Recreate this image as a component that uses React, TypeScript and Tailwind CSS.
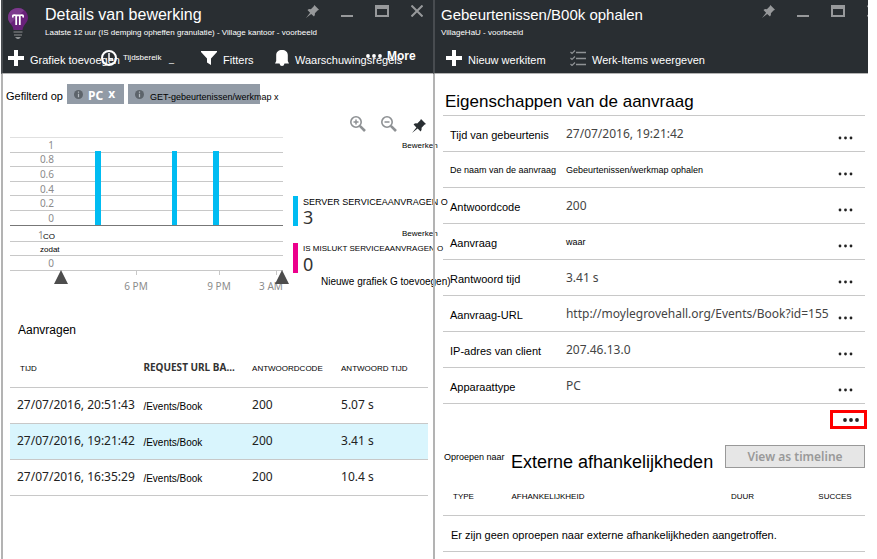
import type { ReactNode } from 'react';

const SANS = "font-['Liberation_Sans',Arial,sans-serif]";
const HUMAN = "font-['Noto_Sans','Open_Sans',sans-serif]";

function PinIcon({ size }: { size: number }) {
  return (
    <svg width={size} height={size} viewBox="0 0 14 14" fill="currentColor" aria-hidden="true">
      <path d="M9 0L14 5L12.4 5.8L9.6 8.8Q10 11 8.6 12.4L5.6 9.6L0 14L4.4 8.4L1.6 5.4Q3 4 5.2 4.5L8.2 1.6Z" />
    </svg>
  );
}

function BulbIcon() {
  return (
    <svg width="20" height="31" viewBox="0 0 20 31" aria-hidden="true">
      <path d="M10 0C4.300 0 0 4.300 0 9.600C0 13.500 3 16 4.400 18.600C5 19.800 5.200 20.500 5.500 22H14.500C14.800 20.500 15 19.800 15.600 18.600C17 16 20 13.500 20 9.600C20 4.300 15.700 0 10 0Z" fill="#68217a" />
      <path d="M10 0C4.300 0 0 4.300 0 9.600C0 12 1.200 14 2.500 15.600L16 2.300C14.300 .8 12.300 0 10 0Z" fill="#7c3a8d" />
      <path d="M5 9.500Q4 6.300 8 7.300H12Q16 6.300 15 9.500M8.200 7.300V17M11.800 7.300V17" stroke="#fff" strokeWidth="1.800" fill="none" />
      <path d="M5.500 24H14.500M6 27H14" stroke="#6d7073" strokeWidth="1.600" />
      <path d="M7 29H13L11 31H9Z" fill="#8d9093" />
    </svg>
  );
}

function PlusIcon() {
  return (
    <svg width="16" height="16" viewBox="0 0 16 16" aria-hidden="true">
      <path d="M8 0V16M0 8H16" stroke="#fff" strokeWidth="4" />
    </svg>
  );
}

function ClockIcon() {
  return (
    <svg width="16" height="16" viewBox="0 0 16 16" fill="none" stroke="#fff" aria-hidden="true">
      <circle cx="8" cy="8" r="7" strokeWidth="2" />
      <path d="M8 3V9H12" strokeWidth="1.500" />
    </svg>
  );
}

function FunnelIcon() {
  return (
    <svg width="16" height="14" viewBox="0 0 16 14" fill="#fff" aria-hidden="true">
      <path d="M0 0H16V1L10 7.500V14L6 11.500V7.500L0 1Z" />
    </svg>
  );
}

function BellIcon() {
  return (
    <svg width="14" height="16" viewBox="0 0 14 16" fill="#fff" aria-hidden="true">
      <path d="M7 0C3.500 0 1.200 2 1.200 5V11L0 13.500H14L12.800 11V5C12.800 2 10.500 0 7 0ZM4.500 13.500H9.500Q9 16 7 16Q5 16 4.500 13.500Z" />
    </svg>
  );
}

function ChecklistIcon() {
  return (
    <svg width="16" height="16" viewBox="0 0 16 16" fill="none" stroke="#8f9295" aria-hidden="true">
      <path d="M6 2.500H16M6 8.500H16M6 14.500H16" strokeWidth="1.500" />
      <path d="M.5 2L2 3.500L5 .5M.5 8L2 9.500L5 6.500M.5 14L2 15.500L5 12.500" strokeWidth="1.200" />
    </svg>
  );
}

function MagnifierIcon({ plus }: { plus: boolean }) {
  return (
    <svg width="16" height="16" viewBox="0 0 16 16" fill="none" stroke="#8e9194" aria-hidden="true">
      <circle cx="6" cy="6" r="5.200" strokeWidth="1.600" />
      <path d="M9.800 9.800L15 15" strokeWidth="2.600" />
      <path d={plus ? 'M6 3.500V8.500M3.500 6H8.500' : 'M3.500 6H8.500'} strokeWidth="1.500" />
    </svg>
  );
}

function InfoIcon() {
  return (
    <svg width="9" height="9" viewBox="0 0 9 9" className="shrink-0" aria-hidden="true">
      <circle cx="4.500" cy="4.500" r="4.500" fill="#5d646b" />
      <path d="M4.500 1.500V2.700M4.500 3.700V7.300" stroke="#b4bac0" strokeWidth="1.200" />
    </svg>
  );
}

function Dots({ wide = false }: { wide?: boolean }) {
  return (
    <svg width={wide ? 17 : 15} height="4" viewBox={wide ? '0 0 17 4' : '0 0 15 4'} fill="currentColor" aria-hidden="true">
      <circle cx="2" cy="2" r={wide ? 1.9 : 1.4} />
      <circle cx={wide ? 8 : 7.5} cy="2" r={wide ? 1.9 : 1.4} />
      <circle cx={wide ? 14 : 13} cy="2" r={wide ? 1.9 : 1.4} />
    </svg>
  );
}

function WindowButtons() {
  return (
    <div className="flex h-[22px] shrink-0 items-center gap-[22px] text-[#97999b]">
      <button aria-label="Vastmaken"><PinIcon size={13} /></button>
      <button aria-label="Minimaliseren" className="flex h-3 w-3 items-end"><span className="h-[2px] w-3 bg-[#97999b]" /></button>
      <button aria-label="Maximaliseren">
        <svg width="14" height="12" viewBox="0 0 14 12" aria-hidden="true">
          <path d="M0 0H14V12H0ZM2 4V10H12V4Z" fill="currentColor" fillRule="evenodd" />
        </svg>
      </button>
      <button aria-label="Sluiten">
        <svg width="12" height="12" viewBox="0 0 12 12" aria-hidden="true">
          <path d="M.5 .5L11.500 11.500M11.500 .5L.5 11.500" stroke="currentColor" strokeWidth="2" />
        </svg>
      </button>
    </div>
  );
}

function Tool({ icon, label, width, small = false }: { icon: ReactNode; label: string; width: string; small?: boolean }) {
  return (
    <button className={`flex h-5 shrink-0 items-center gap-[6px] whitespace-nowrap ${width} ${small ? 'text-[8px]' : 'text-[11px]'}`}>
      <span className="shrink-0">{icon}</span>
      <span className={small ? '' : 'pt-1'}>{label}</span>
    </button>
  );
}

const gridLines = [21, 35, 50, 64, 79, 110, 124];
const axisLabels = [
  { y: 18, text: '1' },
  { y: 32, text: '0.8' },
  { y: 47, text: '0.6' },
  { y: 62, text: '0.4' },
  { y: 76, text: '0.2' },
  { y: 91, text: '0' },
  { y: 136, text: '0' },
];

function Chart() {
  return (
    <svg width="282" height="164" viewBox="0 0 282 164" className={`mt-[15px] shrink-0 text-[10px] ${HUMAN}`} role="img" aria-label="Serviceaanvragen per tijdstip">
      <rect y="6" width="273" height="1" fill="#e0e0e0" />
      {gridLines.map((y) => <rect key={y} y={y} width="273" height="1" fill="#c8c8c8" />)}
      <rect y="139" width="273" height="1" fill="#c8c8c8" />
      <rect x="85" y="20" width="6" height="74" fill="#00bcf2" />
      <rect x="162" y="20" width="5" height="74" fill="#00bcf2" />
      <rect x="203" y="20" width="6" height="74" fill="#00bcf2" />
      <rect y="94" width="273" height="1" fill="#777" />
      {[126, 209, 266].map((x) => <rect key={x} x={x} y="140" width="1" height="4" fill="#c8c8c8" />)}
      {axisLabels.map((l) => <text key={l.y} x="44" y={l.y} textAnchor="end" fill="#8b8b8b">{l.text}</text>)}
      <text x="28" y="108" fill="#8b8b8b">1</text>
      <text x="33" y="108" fill="#000" className={`text-[8px] ${SANS}`}>CO</text>
      <text x="30" y="121" fill="#000" className={`text-[8px] ${SANS}`}>zodat</text>
      <text x="126" y="159" textAnchor="middle" fill="#8b8b8b">6 PM</text>
      <text x="209" y="159" textAnchor="middle" fill="#8b8b8b">9 PM</text>
      <text x="261" y="159" textAnchor="middle" fill="#8b8b8b">3 AM</text>
      <path d="M51 139L58 153H44ZM272 139L279 153H265Z" fill="#4d4d4d" />
    </svg>
  );
}

function Legend({ color, label, value, labelSize }: { color: string; label: string; value: string; labelSize: string }) {
  return (
    <div className="flex h-[30px] gap-[5px]">
      <span className={`w-[5px] shrink-0 ${color}`} />
      <div className="whitespace-nowrap">
        <p className={`h-3 leading-[12px] text-black ${labelSize}`}>{label}</p>
        <p className={`h-[18px] text-[18px] leading-[18px] text-[#333] ${HUMAN}`}>{value}</p>
      </div>
    </div>
  );
}

const requests = [
  { time: '27/07/2016, 20:51:43', code: '200', duration: '5.07 s', selected: false },
  { time: '27/07/2016, 19:21:42', code: '200', duration: '3.41 s', selected: true },
  { time: '27/07/2016, 16:35:29', code: '200', duration: '10.4 s', selected: false },
];

const properties = [
  { name: 'Tijd van gebeurtenis', value: '27/07/2016, 19:21:42', small: false },
  { name: 'De naam van de aanvraag', value: 'Gebeurtenissen/werkmap ophalen', small: true },
  { name: 'Antwoordcode', value: '200', small: false },
  { name: 'Aanvraag', value: 'waar', smallValue: true, small: false },
  { name: 'Rantwoord tijd', value: '3.41 s', small: false },
  { name: 'Aanvraag-URL', value: 'http://moylegrovehall.org/Events/Book?id=155', small: false },
  { name: 'IP-adres van client', value: '207.46.13.0', small: false },
  { name: 'Apparaattype', value: 'PC', small: false },
];

function DetailsPanel() {
  return (
    <section className="min-w-0 border-l-2 border-[#b3b3b3]">
      <header className="-ml-[2px] h-[74px] border-b border-l-2 border-b-[#b3b3b3] border-l-[#484c50] bg-[#292e32] pl-[5px] text-white">
        <div className="flex h-[46px] gap-[17px]">
          <span className="pt-2"><BulbIcon /></span>
          <div className="min-w-0 flex-1 whitespace-nowrap">
            <h1 className="mt-[5px] h-5 text-[16px] leading-[20px]">Details van bewerking</h1>
            <p className="mt-[2px] text-[8px] leading-[12px]">Laatste 12 uur (IS demping opheffen granulatie) - Village kantoor - voorbeeld</p>
          </div>
          <div className="-ml-[34px] pr-[10px]"><WindowButtons /></div>
        </div>
        <div className="flex h-6 items-center">
          <Tool icon={<PlusIcon />} label="Grafiek toevoegen" width="w-[93px]" />
          <Tool icon={<ClockIcon />} label="Tijdsbereik" width="w-[68px]" small />
          <span className="w-8 pt-1 text-[9px]">_</span>
          <Tool icon={<FunnelIcon />} label="Fitters" width="w-[74px]" />
          <Tool icon={<BellIcon />} label="Waarschuwingsregels" width="w-[91px]" />
          <button className="flex h-5 items-center gap-1 pb-1 text-[12px] font-bold"><Dots wide />More</button>
        </div>
      </header>

      <div className="flex h-[42px] items-start gap-1 whitespace-nowrap pl-[3px] pt-[10px]">
        <span className="mr-px w-14 text-[11px] leading-[24px]">Gefilterd op</span>
        <button className={`flex h-5 w-[57px] items-center gap-[5px] bg-[#929ba6] pl-[7px] text-[12px] font-bold text-white ${HUMAN}`}>
          <InfoIcon /><span className="pt-[3px]">PC</span><span>x</span>
        </button>
        <button className="flex h-5 w-[132px] items-center gap-[6px] bg-[#929ba6] pl-[7px] text-[9px]">
          <InfoIcon /><span className="pt-2">GET-gebeurtenissen/werkmap x</span>
        </button>
      </div>

      <div className="flex h-[175px] pl-[7px]">
        <Chart />
        <div className="ml-px min-w-0 flex-1 whitespace-nowrap">
          <div className="flex h-4 items-center justify-end gap-[15px] pr-[7px]">
            <button aria-label="Inzoomen"><MagnifierIcon plus /></button>
            <button aria-label="Uitzoomen"><MagnifierIcon plus={false} /></button>
            <button aria-label="Grafiek vastmaken" className="pt-1 text-[#292e32]"><PinIcon size={14} /></button>
          </div>
          <button className="mt-2 ml-[109px] block h-[11px] text-[8px] leading-[11px]">Bewerken</button>
          <div className="mt-[45px]"><Legend color="bg-[#00bcf2]" label="SERVER SERVICEAANVRAGEN O" value="3" labelSize="text-[9px]" /></div>
          <button className="mt-[3px] mb-1 ml-[109px] block h-[10px] text-[8px] leading-[10px]">Bewerken</button>
          <Legend color="bg-[#ec008c]" label="IS MISLUKT SERVICEAANVRAGEN O" value="0" labelSize="text-[8px]" />
          <button className="ml-7 block h-[18px] text-[10px] leading-[18px]">Nieuwe grafiek G toevoegen)</button>
        </div>
      </div>

      <h2 className="pl-[15px] pt-[31px] text-[12px] leading-[16px]">Aanvragen</h2>
      <div className="pl-[7px] pr-[5px] pt-[9px]">
        <table className="w-full table-fixed border-collapse whitespace-nowrap text-left">
          <colgroup>
            <col className="w-[30%]" /><col className="w-[26%]" /><col className="w-[22%]" /><col />
          </colgroup>
          <thead>
            <tr className="h-10 border-b border-[#c8c8c8] text-[8px]">
              <th className="pl-[10px] pt-1 font-normal">TIJD</th>
              <th className={`pl-2 pt-[2px] text-[10px] font-bold text-[#333] ${HUMAN}`}>REQUEST URL BA...</th>
              <th className="pl-2 pt-1 font-normal">ANTWOORDCODE</th>
              <th className="pl-[5px] pt-1 font-normal">ANTWOORD TIJD</th>
            </tr>
          </thead>
          <tbody>
            {requests.map((r) => (
              <tr key={r.time} className={`h-9 border-b border-[#c8c8c8] text-[12px] text-[#222] ${HUMAN} ${r.selected ? 'bg-[#d9f5fd]' : ''}`}>
                <td className="pl-[7px]">{r.time}</td>
                <td className={`pl-2 pt-[2px] text-[10px] text-black ${SANS}`}>/Events/Book</td>
                <td className="pl-2">{r.code}</td>
                <td className="pl-[5px]">{r.duration}</td>
              </tr>
            ))}
          </tbody>
        </table>
      </div>
    </section>
  );
}

function PropertiesPanel() {
  return (
    <section className="min-w-0 border-l-2 border-[#b3b3b3]">
      <header className="-ml-[2px] h-[74px] overflow-hidden border-b border-l-2 border-b-[#b3b3b3] border-l-[#484c50] bg-[#292e32] text-white">
        <div className="flex h-[46px] justify-between whitespace-nowrap pl-[6px]">
          <div>
            <h1 className="mt-[5px] h-5 text-[15px] leading-[20px]">Gebeurtenissen/B00k ophalen</h1>
            <p className="mt-[2px] text-[8px] leading-[12px]">VillageHaU - voorbeeld</p>
          </div>
          <div className="-mr-[11px]"><WindowButtons /></div>
        </div>
        <div className="flex h-6 items-center pl-[11px]">
          <Tool icon={<PlusIcon />} label="Nieuw werkitem" width="w-[124px]" />
          <Tool icon={<ChecklistIcon />} label="Werk-Items weergeven" width="w-[140px]" />
        </div>
      </header>

      <div className="pl-2 pr-[3px]">
        <h2 className="h-[41px] pl-[2px] pt-[17px] text-[17px] leading-[22px]">Eigenschappen van de aanvraag</h2>
        <table className="w-full table-fixed border-collapse whitespace-nowrap border-t border-[#c8c8c8] text-left">
          <colgroup><col className="w-[27%]" /><col /><col className="w-12" /></colgroup>
          <tbody>
            {properties.map((p) => (
              <tr key={p.name} className="h-9 border-b border-[#c8c8c8]">
                <th className={`pl-[7px] pt-[3px] font-normal ${p.small ? 'text-[9px]' : 'text-[11px]'}`}>{p.name}</th>
                <td className={`pl-[9px] ${p.small || p.smallValue ? `pt-[3px] text-[9px] ${SANS}` : `pt-px text-[12px] text-[#444] ${HUMAN}`}`}>{p.value}</td>
                <td className="pr-3 pt-[9px]">
                  <button aria-label={`Meer over ${p.name}`} className="ml-auto block text-[#222]"><Dots /></button>
                </td>
              </tr>
            ))}
          </tbody>
        </table>
        <div className="-mr-[2px] flex justify-end pt-[6px]">
          <button aria-label="Meer eigenschappen" className="flex h-[19px] w-[37px] items-center justify-center border-[3px] border-[#f00] pl-[5px] text-[#222]"><Dots wide /></button>
        </div>
        <div className="flex h-[50px] whitespace-nowrap pt-4">
          <span className="w-[68px] pl-px pt-[6px] text-[9px] leading-[12px]">Oproepen naar</span>
          <h2 className="min-w-0 flex-1 pt-[6px] text-[18px] leading-[22px]">Externe afhankelijkheden</h2>
          <button disabled className={`h-[23px] w-[140px] border border-[#999] bg-[#e6e6e6] text-[12px] font-semibold text-[#999] ${HUMAN}`}>View as timeline</button>
        </div>
        <table className="w-full table-fixed border-collapse whitespace-nowrap text-left">
          <colgroup><col className="w-[16%]" /><col className="w-[52%]" /><col className="w-[20%]" /><col /></colgroup>
          <thead>
            <tr className="h-9 border-b border-[#c8c8c8] text-[8px]">
              <th className="pl-[10px] font-normal">TYPE</th>
              <th className="pl-px font-normal">AFHANKELIJKHEID</th>
              <th className="pl-px font-normal">DUUR</th>
              <th className="pl-1 font-normal">SUCCES</th>
            </tr>
          </thead>
          <tbody>
            <tr className="h-9 border-b border-[#c8c8c8] text-[11px]">
              <td colSpan={4} className="pl-2 pt-1">Er zijn geen oproepen naar externe afhankelijkheden aangetroffen.</td>
            </tr>
          </tbody>
        </table>
      </div>
    </section>
  );
}

export default function App() {
  return (
    <main className={`grid min-h-screen grid-cols-[432fr_435fr] bg-white pl-px pr-[9px] text-black ${SANS}`}>
      <DetailsPanel />
      <PropertiesPanel />
    </main>
  );
}
